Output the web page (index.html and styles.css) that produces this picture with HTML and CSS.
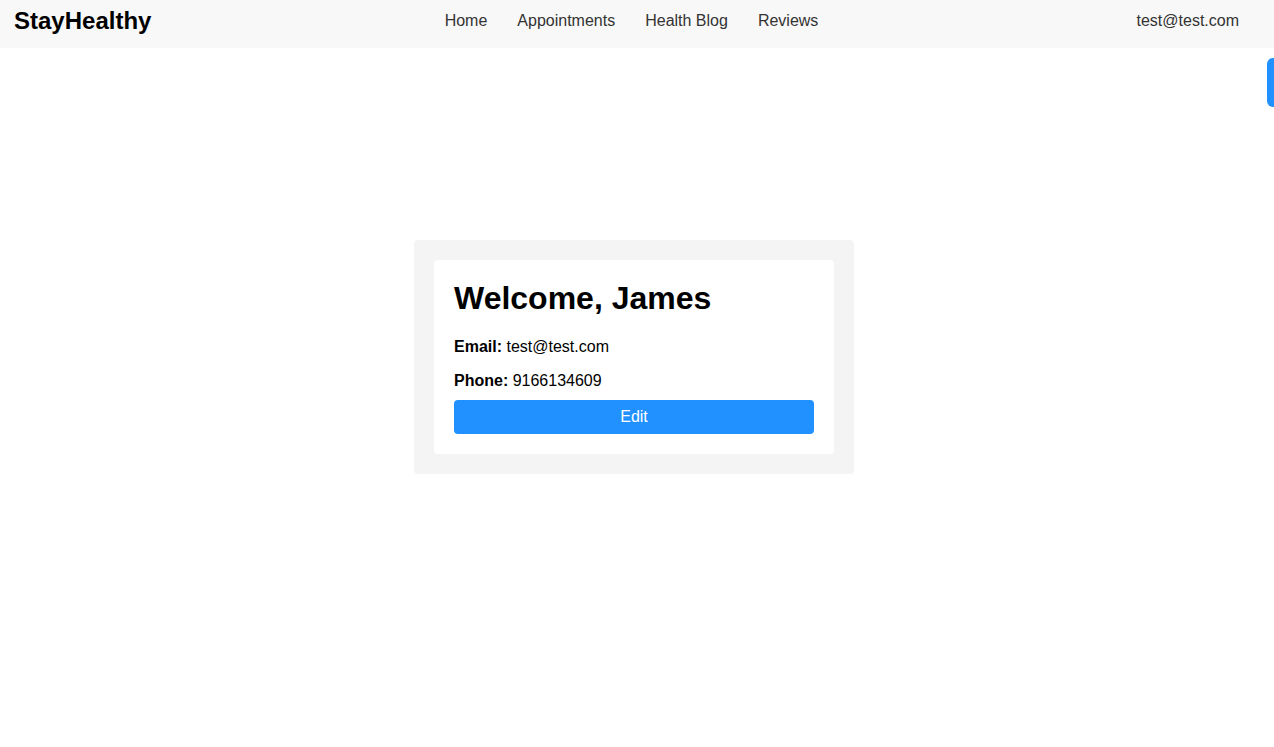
FILE: index.html
```html
<!DOCTYPE html>
<html>
<head>
<meta charset="utf-8">
<title>StayHealthy</title>
<link rel="stylesheet" href="styles.css">
</head>
<body>
<nav class="navbar">
  <div class="logo">StayHealthy</div>
  <ul class="nav-links">
    <li>Home</li>
    <li>Appointments</li>
    <li>Health Blog</li>
    <li>Reviews</li>
  </ul>
  <div class="nav-user">test@test.com</div>
</nav>
<main class="main">
  <div class="profile-outer">
    <div class="profile-card">
      <h1 class="welcome">Welcome, James</h1>
      <p class="info"><b>Email:</b> test@test.com</p>
      <p class="info last"><b>Phone:</b> 9166134609</p>
      <button class="edit-btn">Edit</button>
    </div>
  </div>
</main>
<div class="side-tab"></div>
</body>
</html>
```
FILE: styles.css
```css
* { box-sizing: border-box; }
html, body { margin: 0; padding: 0; }
body {
  font-family: "Liberation Sans", Arial, sans-serif;
  background: #ffffff;
  color: #000;
  min-height: 747px;
}
.navbar {
  height: 48px;
  background: #f8f8f8;
  display: grid;
  grid-template-columns: 1fr auto 1fr;
  align-items: center;
  padding: 0 35px 7px 14px;
}
.logo {
  font-size: 24px;
  font-weight: bold;
  color: #000;
}
.nav-links {
  list-style: none;
  display: flex;
  gap: 30px;
  margin: 0;
  padding: 0 0 0 10px;
  font-size: 16px;
  color: #333;
}
.nav-user {
  justify-self: end;
  font-size: 16px;
  color: #333;
}
.main {
  display: flex;
  justify-content: center;
  padding: 192px 6px 0 0;
}
.profile-outer {
  width: 440px;
  background: #f4f4f4;
  border-radius: 4px;
  padding: 20px;
}
.profile-card {
  background: #fff;
  border-radius: 4px;
  padding: 20px;
  display: flex;
  flex-direction: column;
}
.welcome {
  font-size: 32px;
  font-weight: bold;
  margin: 0 0 21px;
  line-height: 37px;
}
.info {
  font-size: 16px;
  margin: 0 0 16px;
  line-height: 18px;
}
.info.last { margin-bottom: 10px; }
.edit-btn {
  height: 34px;
  border: none;
  border-radius: 4px;
  background: #2191ff;
  color: #fff;
  font-family: "Liberation Sans", Arial, sans-serif;
  font-size: 16px;
  cursor: pointer;
}
.side-tab {
  position: absolute;
  top: 58px;
  right: 0;
  width: 7px;
  height: 49px;
  background: #2191ff;
  border-radius: 6px 0 0 6px;
}
```
